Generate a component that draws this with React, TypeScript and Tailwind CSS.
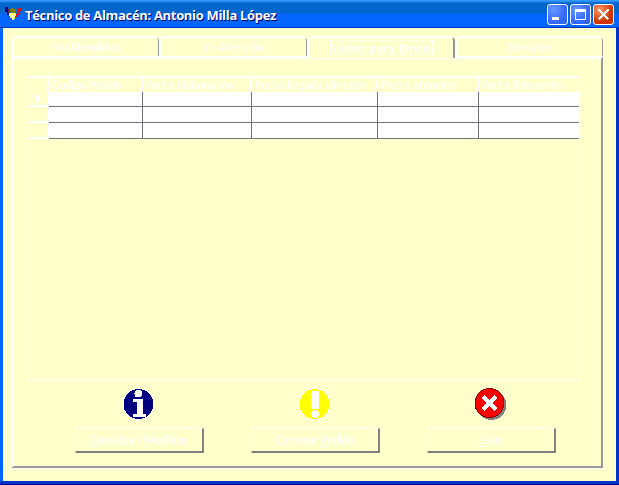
import type { ReactNode } from "react";

const tabs = [
  { label: "No Atendidos", box: "w-[147px]", text: "tracking-[-0.4px]" },
  { label: "En Atención", box: "w-[147px] ml-[1px]", text: "tracking-[-0.3px]" },
  { label: "Enviados", box: "w-[147px] ml-[1px]", text: "tracking-[-0.3px]" },
];

const columns = [
  { label: "Codigo Pedido", width: "w-[94px]", text: "tracking-[-0.3px]" },
  { label: "Fecha elaboración", width: "w-[109px]", text: "tracking-[-0.2px]" },
  { label: "Fecha llegada almacén", width: "w-[126px]", text: "tracking-[-0.05px]" },
  { label: "Fecha atención", width: "w-[101px]", text: "tracking-[0px]" },
  { label: "Fecha listo envio", width: "w-[100px]", text: "tracking-[-0.2px]" },
];

function Logo() {
  return (
    <svg className="ml-[3px] mt-[1px] h-[15px] w-[18px]" viewBox="0 0 18 15" shapeRendering="crispEdges">
      <path d="M0 0h3v3h1v4h2v3H4V8H2V5H0z" fill="#000080" />
      <path d="M3 2h2v4h1v4H4V6H3z" fill="#7b2942" />
      <path d="M13 1h3v3h-1v4h-2v2h-2V7h1V4h1z" fill="#e01010" />
      <path d="M4 6h7v3h-1v3H9v1H7v-2H5V9H4z" fill="#ffff66" />
      <path d="M6 8h3v3H6z" fill="#fff" />
      <path d="M6 1h3v1h2v3h-1v1H6V5H5V2h1z" fill="#808000" />
    </svg>
  );
}

function Caption({ children, className }: { children: ReactNode; className: string }) {
  return (
    <div className={`flex h-[21px] w-[21px] shrink-0 items-center justify-center rounded-[3px] border border-white ${className}`}>
      <svg width="19" height="19" viewBox="0 0 19 19" shapeRendering="crispEdges" fill="none" stroke="#fff">
        {children}
      </svg>
    </div>
  );
}

function Tab({ label, box, text }: { label: string; box: string; text: string }) {
  return (
    <div className={`h-[20px] shrink-0 rounded-t-[5px] border-l-2 border-r border-t-2 border-l-white border-r-[#999] border-t-white ${box}`}>
      <div className={`pt-[1px] text-center leading-[16px] ${text}`}>{label}</div>
    </div>
  );
}

function Action({ icon, children, text = "" }: { icon: ReactNode; children: ReactNode; text?: string }) {
  return (
    <div className="flex w-[129px] flex-col items-center">
      <div className="h-[41px] w-[35px]">{icon}</div>
      <button className="h-[25px] w-full whitespace-nowrap border-b-2 border-l border-r-2 border-t border-b-[#808080] border-l-white border-r-[#808080] border-t-white pb-[1px] leading-[20px]">
        <span className={text}>{children}</span>
      </button>
    </div>
  );
}

function Key({ children }: { children: string }) {
  return <span className="underline decoration-1 underline-offset-2">{children}</span>;
}

export default function App() {
  return (
    <div className="flex h-[485px] w-[619px] flex-col overflow-hidden bg-[#0033cc] font-['Lato','Liberation_Sans',sans-serif] text-[12px] text-white">
      <header className="flex h-[28px] shrink-0 items-center border-b border-b-[#0033cc] bg-[linear-gradient(to_bottom,#3399ff_0px,#3399ff_1px,#0066cc_3px,#0066cc_13px,#0066ff_14px,#0066ff_28px)] pl-[2px] pr-[5px]">
        <Logo />
        <h1 className="ml-[2px] mt-[2px] grow whitespace-nowrap font-['Open_Sans',sans-serif] text-[13px] font-bold leading-[18px] tracking-[-0.32px] [text-shadow:1px_1px_0_#000066]">
          Técnico de Almacén: Antonio Milla López
        </h1>
        <div className="mt-[1px] flex gap-[2px]">
          <Caption className="bg-[radial-gradient(circle_at_30%_25%,#6699ff,#3366ff_65%,#3366cc)]">
            <path d="M4 13.5h7" strokeWidth="3" />
          </Caption>
          <Caption className="bg-[radial-gradient(circle_at_30%_25%,#6699ff,#3366ff_65%,#3366cc)]">
            <path d="M4 5.5h11M4.5 5v10M14.5 5v10M4 14.5h11" />
            <path d="M4 5h11" strokeWidth="3" />
          </Caption>
          <Caption className="bg-[radial-gradient(circle_at_30%_25%,#ff9966,#cc3300_65%,#cc3300)]">
            <path d="M4.5 4.5l10 10M14.5 4.5l-10 10" strokeWidth="2.4" />
          </Caption>
        </div>
      </header>

      <main className="mr-[3px] flex h-[453px] shrink-0 flex-col border-l-[3px] border-l-[#0066ff] bg-[#ffffcc] pl-[8px] pt-[8px]">
        <nav className="flex h-[20px] shrink-0 pl-px">
          <Tab {...tabs[0]} />
          <Tab {...tabs[1]} />
          <div className="relative z-10 ml-[1px] h-[22px] w-[147px] shrink-0 rounded-t-[5px] border-l-2 border-r-2 border-t-2 border-l-white border-r-[#999] border-t-white bg-[#ffffcc] text-center">
            <span className="mt-[2px] inline-block h-[15px] w-[103px] whitespace-nowrap border border-dashed border-white text-[12px] font-bold leading-[14px] tracking-[0.5px]">
              Listos para Envío
            </span>
          </div>
          <Tab {...tabs[2]} />
        </nav>

        <section className="h-[413px] w-[593px] shrink-0 border-b border-r border-white">
          <div className="h-[412px] w-[592px] border-b-2 border-l-[3px] border-r-2 border-t-[3px] border-b-[#999] border-l-white border-r-[#999] border-t-white pl-[13px] pt-[17px]">
            <div className="h-[305px] w-[553px] border border-white">
              <div className="flex h-[15px] border-t border-white">
                <div className="w-[21px] shrink-0 border-r-2 border-white" />
                {columns.map((c, i) => (
                  <div
                    key={c.label}
                    className={`h-[14px] shrink-0 overflow-hidden whitespace-nowrap pl-[3px] text-[11.5px] leading-[14px] ${c.width} ${c.text} ${i < 4 ? "border-r-2 border-white" : ""}`}
                  >
                    {c.label}
                  </div>
                ))}
              </div>
              {[0, 1, 2].map((r) => (
                <div key={r} className={`flex ${r === 0 ? "h-[15px]" : "h-[16px]"}`}>
                  <div className="flex w-[21px] shrink-0 items-center border-b-2 border-r border-white pl-[7px]">
                    {r === 0 && (
                      <svg width="6" height="11" viewBox="0 0 6 11" shapeRendering="crispEdges">
                        <path d="M0 0L6 5.5L0 11z" fill="#fff" />
                      </svg>
                    )}
                  </div>
                  {columns.map((c, i) => (
                    <div
                      key={c.label}
                      className={`shrink-0 border-b border-[#746f7c] bg-white ${c.width} ${i < 4 ? "border-r" : ""}`}
                    />
                  ))}
                </div>
              ))}
            </div>

            <div className="flex gap-[47px] pl-[48px] pt-[6px]">
              <Action
                text="tracking-[-0.75px]"
                icon={
                  <svg width="34" height="34" viewBox="0 0 34 34" shapeRendering="crispEdges">
                    <circle cx="16.5" cy="17" r="16" fill="#fff" />
                    <circle cx="16.5" cy="17" r="15" fill="#000080" />
                    <circle cx="16.5" cy="6.5" r="4" fill="#fff" />
                    <path d="M11 12h10v15h3v3H11v-3h4V15h-4z" fill="#fff" />
                  </svg>
                }
              >
                <Key>C</Key>onsultar / Modificar
              </Action>
              <Action
                text="tracking-[-0.35px]"
                icon={
                  <svg width="34" height="34" viewBox="0 0 34 34" shapeRendering="crispEdges">
                    <circle cx="16.5" cy="17" r="16" fill="#fff" />
                    <circle cx="16.5" cy="17" r="15" fill="#ffff00" />
                    <path d="M13 4h8v18h-8z" fill="#fff" />
                    <circle cx="17" cy="27" r="4" fill="#fff" />
                  </svg>
                }
              >
                Cancelar <Key>P</Key>edido
              </Action>
              <Action
                text="tracking-[-0.3px]"
                icon={
                  <svg width="34" height="34" viewBox="0 0 34 34" shapeRendering="crispEdges">
                    <circle cx="17.5" cy="18" r="15" fill="#808080" />
                    <circle cx="15.5" cy="16" r="15" fill="#800000" />
                    <circle cx="15.5" cy="16" r="14" fill="#ff0000" />
                    <path d="M9 9.5l13 13M22 9.5l-13 13" stroke="#fff" strokeWidth="4" />
                  </svg>
                }
              >
                <Key>S</Key>alir
              </Action>
            </div>
          </div>
        </section>
      </main>
      <div className="mt-[3px] h-[1px] bg-[#000080]" />
    </div>
  );
}
